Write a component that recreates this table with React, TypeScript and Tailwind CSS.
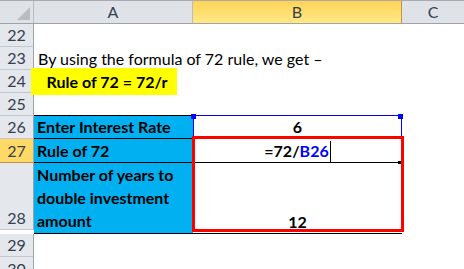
import React from "react";

const FONT = { fontFamily: "Lato, 'Noto Sans', 'Liberation Sans', sans-serif" };

function RowHead({ n, h, active = false, last = false }: { n: number; h: string; active?: boolean; last?: boolean }) {
  return (
    <div
      className={`${h} w-[34px] shrink-0 flex items-end justify-center pb-[2px] text-[16px] leading-[18px] text-[#34404f] border-r border-r-[#9ea3a8] ${
        last ? "" : "border-b"
      } ${active ? "bg-[#ffd966] border-b-[#c29445]" : "bg-[#e4e7eb] border-b-[#c3c7cd]"}`}
    >
      {n}
    </div>
  );
}

export default function App() {
  return (
    <div className="relative w-[464px] h-[269px] overflow-hidden bg-white text-black" style={FONT}>
      {/* Column headers */}
      <div className="flex h-[24px] border-t border-t-[#a7abb0] border-b border-b-[#9ea3a8] text-[16px] text-[#34404f]">
        <div className="relative w-[34px] shrink-0 bg-[#dfe3e8] border-r border-r-[#b9bdc3]">
          <div className="absolute right-[3px] bottom-[3px] w-0 h-0 border-l-[13px] border-l-transparent border-b-[13px] border-b-[#b8bdc3]" />
        </div>
        <div className="w-[159px] shrink-0 bg-[#dfe3e8] border-r border-r-[#b9bdc3] flex items-center justify-center">A</div>
        <div className="w-[209px] shrink-0 bg-gradient-to-b from-[#ffd454] to-[#ffe886] border-r border-r-[#c29445] flex items-center justify-center">
          B
        </div>
        <div className="w-[62px] shrink-0 bg-[#dfe3e8] flex items-center justify-center">C</div>
      </div>

      {/* Row 22 */}
      <div className="flex">
        <RowHead n={22} h="h-[23px]" />
        <div className="flex-1" />
      </div>
      {/* Row 23 */}
      <div className="flex">
        <RowHead n={23} h="h-[23px]" />
        <div className="flex-1 flex items-end pl-[4px] pb-[1px] text-[16px] leading-[20px] whitespace-nowrap">
          By using the formula of 72 rule, we get –
        </div>
      </div>
      {/* Row 24 */}
      <div className="flex">
        <RowHead n={24} h="h-[23px]" />
        <div className="flex-1" />
      </div>
      {/* Row 25 */}
      <div className="flex">
        <RowHead n={25} h="h-[23px]" />
        <div className="w-[159px] border-b border-b-black" />
        <div className="w-[209px] border-b border-b-[#0000ff]" />
      </div>
      {/* Row 26 */}
      <div className="flex">
        <RowHead n={26} h="h-[23px]" />
        <div className="w-[159px] bg-[#00b0f0] border-b border-b-black flex items-end pl-[3px] pb-[1px] text-[16px] leading-[20px] font-bold whitespace-nowrap">
          Enter Interest Rate
        </div>
        <div className="w-[209px] border-b border-b-black flex items-end justify-center pb-[1px] text-[16px] leading-[20px] font-bold">
          6
        </div>
      </div>
      {/* Row 27 */}
      <div className="flex">
        <RowHead n={27} h="h-[24px]" active />
        <div className="w-[159px] bg-[#00b0f0] border-b border-b-black flex items-end pl-[3px] pb-[1px] text-[16px] leading-[20px] font-bold whitespace-nowrap">
          Rule of 72
        </div>
        <div className="w-[209px] border-b border-b-black flex items-end justify-center pb-[1px] text-[16px] leading-[20px] font-bold">
          <span>=72/</span>
          <span className="text-[#0000ff]">B26</span>
          <span className="inline-block w-px h-[21px] bg-black ml-[1px] mb-[-1px]" />
        </div>
      </div>
      {/* Row 28 */}
      <div className="flex">
        <RowHead n={28} h="h-[67px]" />
        <div className="w-[159px] bg-[#00b0f0] border-b border-b-black flex flex-col justify-end pl-[3px] pb-[1px] text-[16px] leading-[23px] font-bold whitespace-nowrap">
          <span>Number of years to</span>
          <span>double investment</span>
          <span>amount</span>
        </div>
        <div className="w-[209px] border-b border-b-black flex items-end justify-center pb-[1px] text-[16px] leading-[20px] font-bold">
          12
        </div>
      </div>
      {/* Row 29 */}
      <div className="flex">
        <RowHead n={29} h="h-[23px]" />
        <div className="flex-1" />
      </div>
      {/* Row 30 */}
      <div className="flex">
        <RowHead n={30} h="h-[23px]" last />
        <div className="flex-1" />
      </div>

      {/* Yellow text box */}
      <div className="absolute left-[31px] top-[68px] w-[146px] h-[27px] bg-[#ffff00] flex items-center justify-center pl-[6px] text-[16px] font-bold whitespace-nowrap">
        Rule of 72 = 72/r
      </div>

      {/* Selection outline around B26 */}
      <div className="absolute left-[193px] top-[115px] w-[209px] h-[24px] border border-[#0000ff]" />
      <div className="absolute left-[191px] top-[114px] w-[5px] h-[5px] bg-[#0000ff]" />
      <div className="absolute left-[398px] top-[114px] w-[5px] h-[5px] bg-[#0000ff]" />

      {/* Red annotation box */}
      <div className="absolute left-[192px] top-[136px] w-[212px] h-[96px] border-[3px] border-[#ff0000]" />
      {/* Fill handle */}
      <div className="absolute left-[398px] top-[161px] w-[3px] h-[3px] bg-black" />
    </div>
  );
}
